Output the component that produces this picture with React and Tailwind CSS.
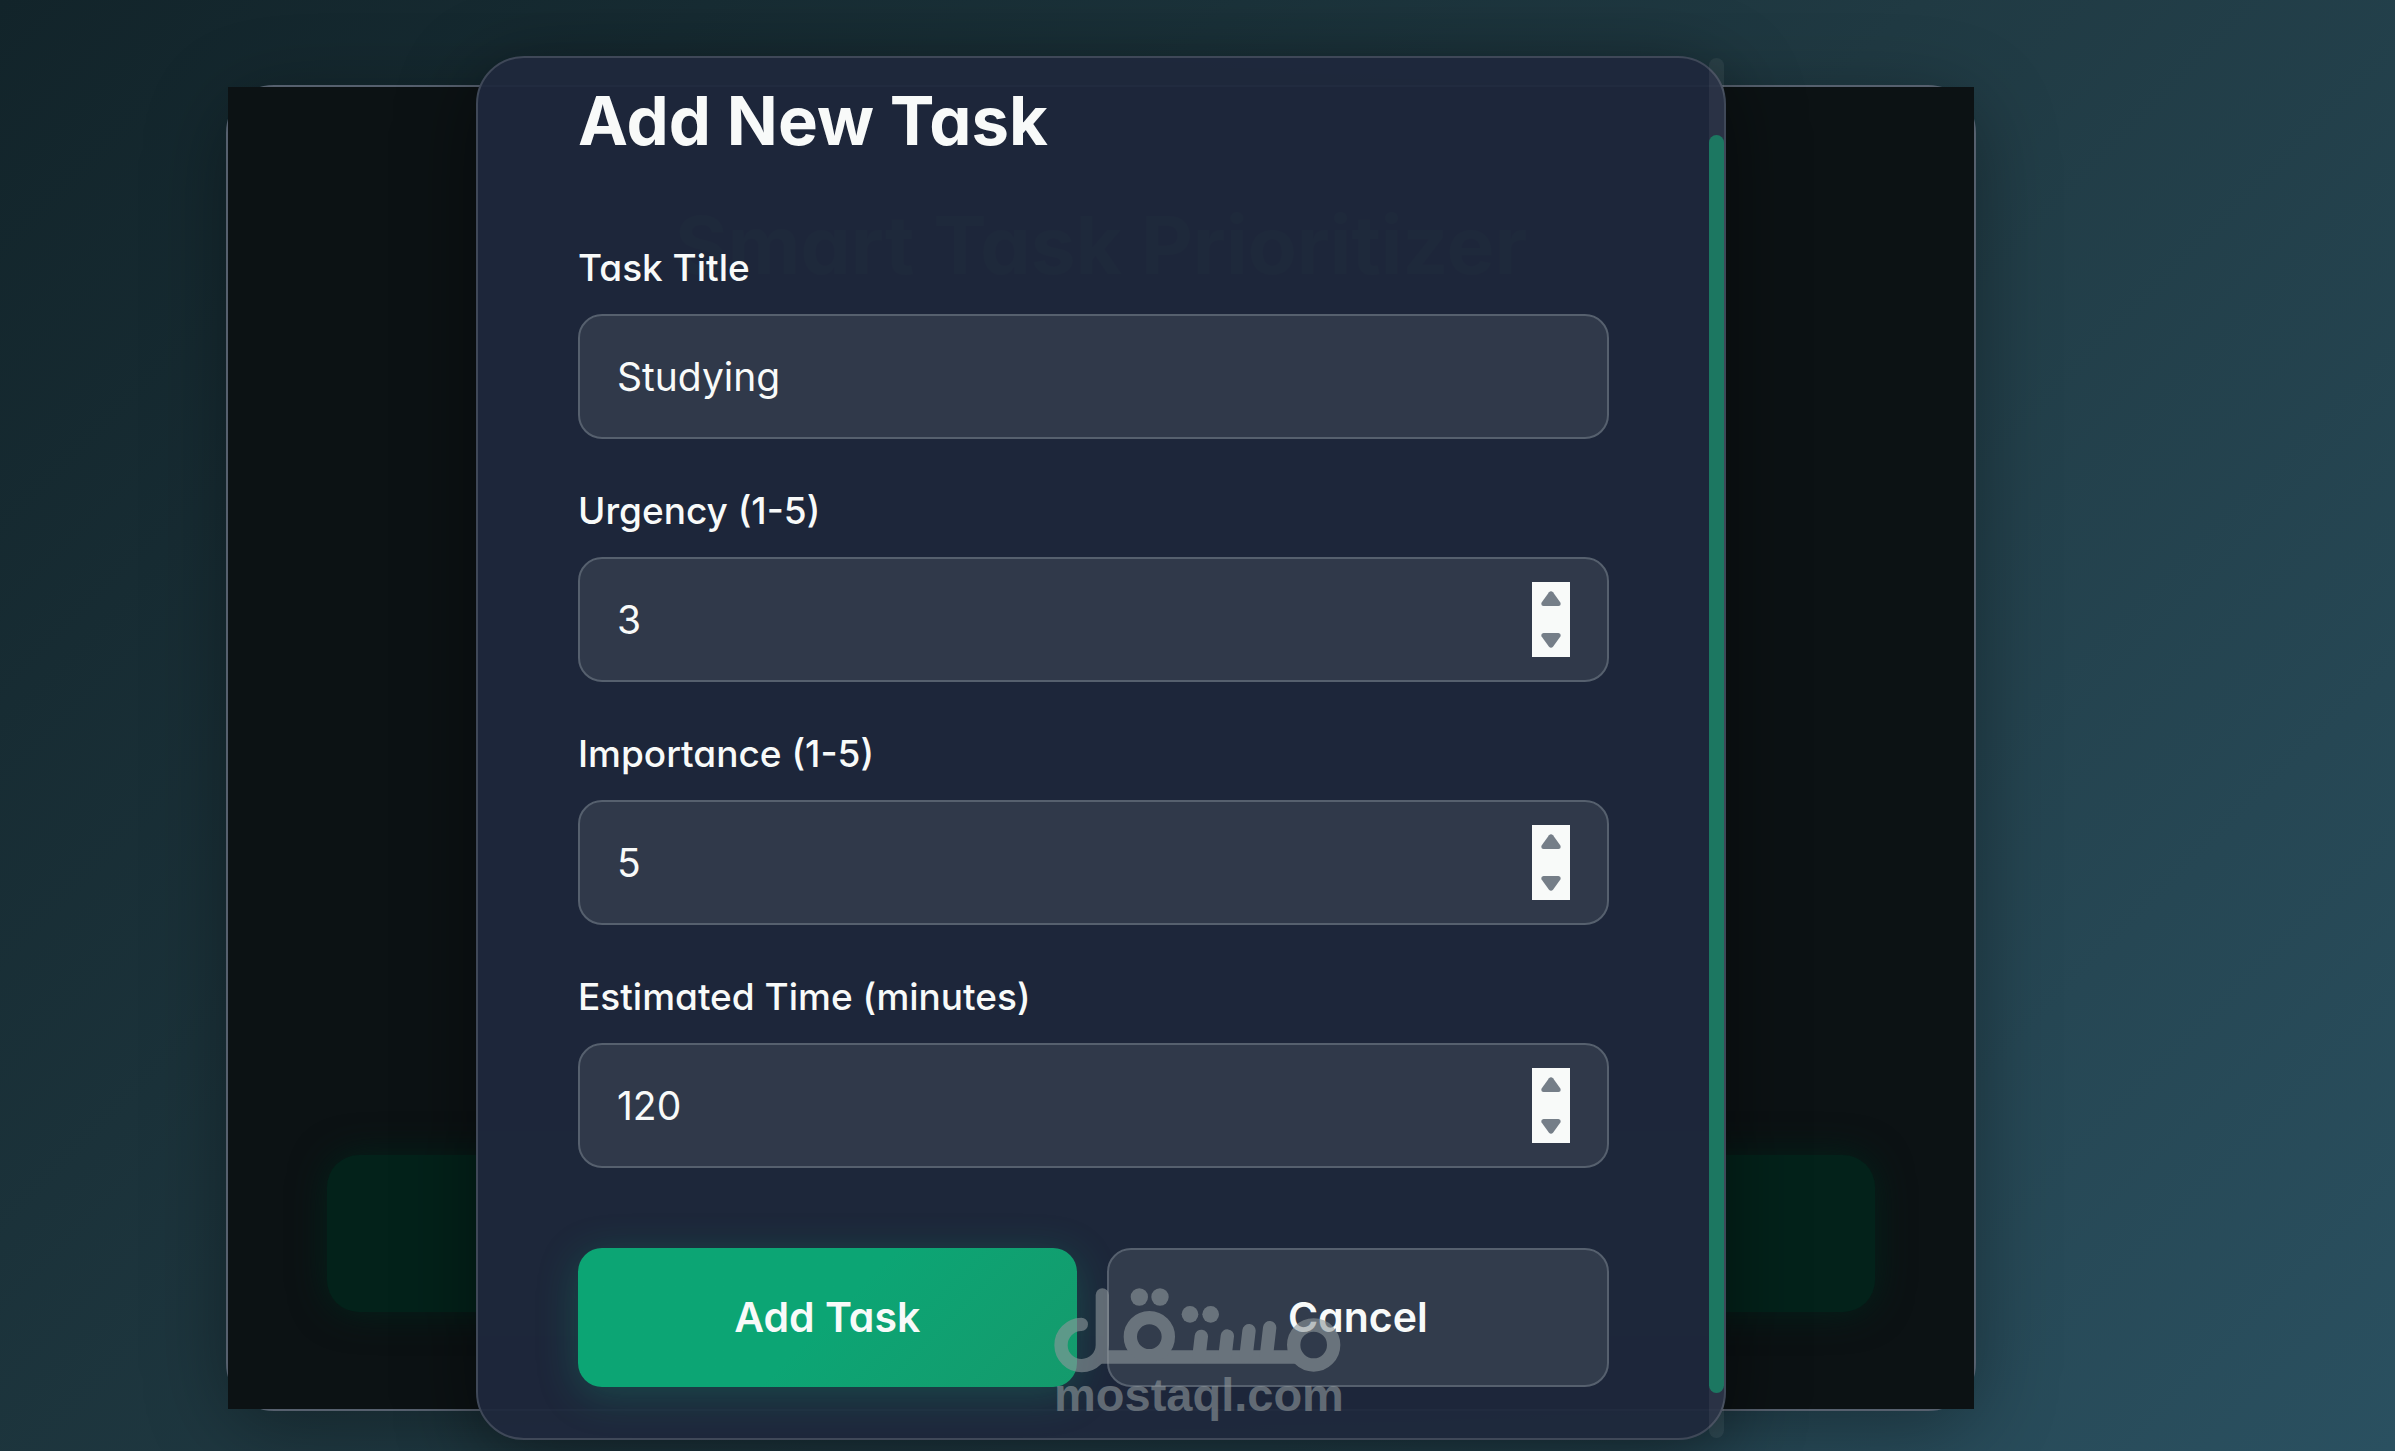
import { useState } from 'react'

const FIELDS = [
  { id: 'title', label: 'Task Title', type: 'text' },
  { id: 'urgency', label: 'Urgency (1-5)', type: 'number' },
  { id: 'importance', label: 'Importance (1-5)', type: 'number' },
  { id: 'time', label: 'Estimated Time (minutes)', type: 'number' },
]

const DEFAULTS = { title: 'Studying', urgency: '3', importance: '5', time: '120' }

function Spinner({ label, onStep }) {
  return (
    <div className="absolute inset-y-[25px] right-[39px] w-[38px] flex flex-col bg-[#f8faf9]">
      <button type="button" aria-label={`Increase ${label}`} onClick={() => onStep(1)}
              className="flex-1 pb-1 flex items-center justify-center">
        <svg width="20" height="15" viewBox="0 0 20 15" fill="#757e88">
          <path d="M8 1.2Q10-.8 12 1.2L19.4 11.5Q20.4 14.6 17.5 15H2.5Q-.4 14.6.6 11.5Z" />
        </svg>
      </button>
      <button type="button" aria-label={`Decrease ${label}`} onClick={() => onStep(-1)}
              className="flex-1 pt-1 flex items-center justify-center">
        <svg width="20" height="15" viewBox="0 0 20 15" fill="#757e88">
          <path d="M8 13.8Q10 15.8 12 13.8L19.4 3.5Q20.4.4 17.5 0H2.5Q-.4.4.6 3.5Z" />
        </svg>
      </button>
    </div>
  )
}

function Field({ field, value, onChange }) {
  const isNumber = field.type === 'number'
  return (
    <div className="flex flex-col">
      <label htmlFor={field.id} className="h-[60px] mb-4 flex items-center text-[37px] font-medium">
        {field.label}
      </label>
      <div className="relative">
        <input id={field.id} type={field.type} value={value}
               onChange={e => onChange(e.target.value)}
               className="block w-full h-[125px] px-[37px] rounded-3xl border-2 border-[#56606e] bg-[#30394a] text-[39px] outline-none [appearance:textfield]" />
        {isNumber && <Spinner label={field.label} onStep={d => onChange(String(Number(value) + d))} />}
      </div>
    </div>
  )
}

function Watermark() {
  return (
    <div className="absolute left-[576px] bottom-[21px] w-[287px] opacity-60 text-[#8f989c] pointer-events-none">
      <svg viewBox="162 207 861 258" className="block w-full" fill="none" stroke="currentColor"
           strokeWidth="40" strokeLinecap="round" aria-hidden="true">
        <path d="M244 319A62 62 0 1 0 307 381V231" />
        <path d="M290 417H940" strokeLinecap="butt" />
        <circle cx="448" cy="356" r="57" />
        <circle cx="941" cy="381" r="60" fill="#303a4b" />
        <path d="M604 355L597 415M682 354L675 415M747 338L738 415M809 329L799 415" />
        <g fill="currentColor" stroke="none">
          <circle cx="418" cy="237" r="26" />
          <circle cx="480" cy="237" r="26" />
          <circle cx="570" cy="289" r="25" />
          <circle cx="632" cy="289" r="25" />
        </g>
      </svg>
      <div className="text-[47px] leading-[44px] font-bold font-['Liberation_Sans',sans-serif]">mostaql.com</div>
    </div>
  )
}

function TaskModal() {
  const [task, setTask] = useState(DEFAULTS)

  return (
    <div role="dialog" aria-labelledby="modal-title"
         className="relative shrink-0 w-full max-w-[1250px] rounded-[48px] border-2 border-[#3f4858] bg-[#1f283c]/95 shadow-[0_16px_80px_rgba(0,0,0,0.45)]">
      <form onSubmit={e => e.preventDefault()} className="pl-[100px] pr-[115px] pt-[18px] pb-[51px]">
        <h2 id="modal-title" className="mb-[72px] h-[90px] flex items-center text-[67px] font-bold">Add New Task</h2>

        <div className="flex flex-col gap-[42px]">
          {FIELDS.map(f => (
            <Field key={f.id} field={f} value={task[f.id]}
                   onChange={v => setTask(t => ({ ...t, [f.id]: v }))} />
          ))}
        </div>

        <div className="mt-20 flex gap-[30px] text-[41px] font-semibold">
          <button type="submit"
                  className="flex-1 h-[139px] rounded-3xl bg-linear-135 from-[#0ca574] from-50% to-[#149a6c] shadow-[0_8px_40px_rgba(16,185,129,0.25)]">
            Add Task
          </button>
          <button type="button"
                  className="flex-1 h-[139px] rounded-3xl border-2 border-[#56606e] bg-[#323c4c]">
            Cancel
          </button>
        </div>
      </form>

      {/* Scroll track and thumb */}
      <div className="absolute inset-y-0 right-0 w-[15px] pt-[77px] pb-[45px] rounded-full bg-white/6">
        <div className="h-full rounded-full bg-[#1c7761]" />
      </div>

      <Watermark />
    </div>
  )
}

export default function App() {
  return (
    <div className="min-h-screen overflow-hidden pt-[85px] pb-10 pl-[226px] pr-[419px] bg-linear-135 from-[#12242a] via-[#203a43] to-[#2a5060] font-[Inter,sans-serif] [font-feature-settings:'cv11'] text-[#f8faf9]">
      <main className="relative h-[1326px] rounded-[48px] border-2 border-[#56606e] shadow-[0_16px_80px_rgba(0,0,0,0.35)]">
        {/* Dimmed page behind the modal */}
        <div className="h-full px-[99px] pt-[110px] pb-[97px] bg-[#0c1214] flex flex-col justify-between">
          <h1 className="text-center text-[80px] leading-[96px] font-bold text-[#203832]">Smart Task Prioritizer</h1>
          <div className="w-full h-[157px] rounded-[32px] bg-[#03221a] shadow-[0_0_36px_#03221a]" />
        </div>
        <div className="absolute inset-0 flex items-center justify-center">
          <TaskModal />
        </div>
      </main>
    </div>
  )
}
